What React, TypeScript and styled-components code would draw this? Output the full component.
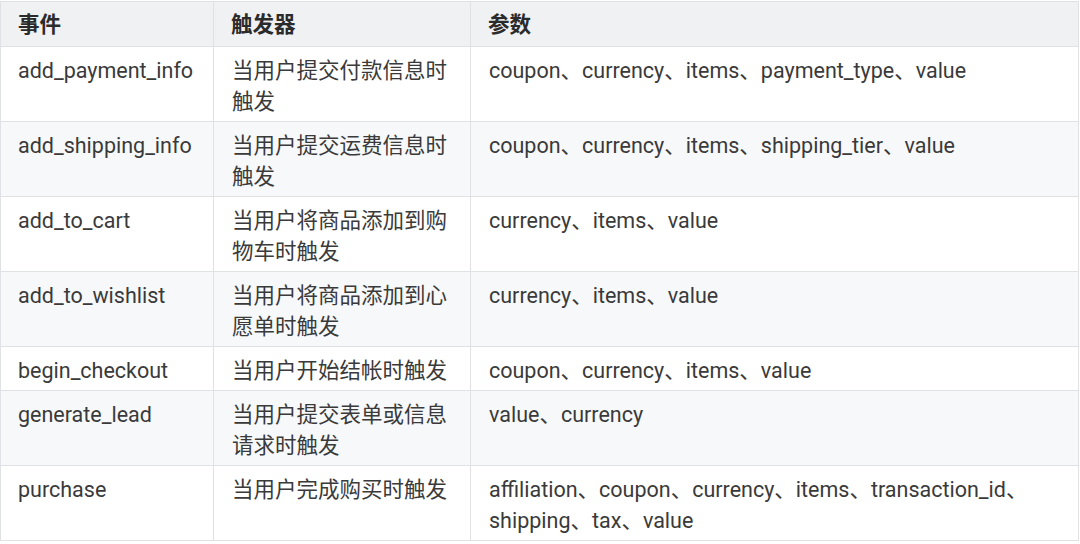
import styled, { createGlobalStyle } from 'styled-components';

const GlobalStyle = createGlobalStyle`
  html, body {
    margin: 0;
    padding: 0;
    background: #ffffff;
  }

  body {
    font-family: Roboto, 'Noto Sans CJK SC', sans-serif;
    color: #3a3a3a;
  }
`;

const StyledTable = styled.table`
  width: 1079px;
  margin-top: 1px;
  border-collapse: collapse;
  table-layout: fixed;
  font-size: 21.5px;
  line-height: 31px;
`;

const HeadCell = styled.th`
  background-color: #f0f1f3;
  border: 1px solid #dfe1e4;
  padding: 7px 16px 6px 17px;
  text-align: left;
  font-weight: 700;
  color: #2b2b2b;
  vertical-align: top;
`;

const Row = styled.tr<{ $striped: boolean }>`
  background-color: ${(p) => (p.$striped ? '#f7f8fa' : '#ffffff')};
`;

const Cell = styled.td`
  border: 1px solid #dfe1e4;
  padding: 8px 16px 4px 18px;
  vertical-align: top;

  &:first-child {
    padding-left: 17px;
  }
`;

const events = [
  {
    name: 'add_payment_info',
    trigger: '当用户提交付款信息时触发',
    params: 'coupon、currency、items、payment_type、value',
  },
  {
    name: 'add_shipping_info',
    trigger: '当用户提交运费信息时触发',
    params: 'coupon、currency、items、shipping_tier、value',
  },
  {
    name: 'add_to_cart',
    trigger: '当用户将商品添加到购物车时触发',
    params: 'currency、items、value',
  },
  {
    name: 'add_to_wishlist',
    trigger: '当用户将商品添加到心愿单时触发',
    params: 'currency、items、value',
  },
  {
    name: 'begin_checkout',
    trigger: '当用户开始结帐时触发',
    params: 'coupon、currency、items、value',
  },
  {
    name: 'generate_lead',
    trigger: '当用户提交表单或信息请求时触发',
    params: 'value、currency',
  },
  {
    name: 'purchase',
    trigger: '当用户完成购买时触发',
    params: 'affiliation、coupon、currency、items、transaction_id、shipping、tax、value',
  },
];

export default function App() {
  return (
    <>
      <GlobalStyle />
      <StyledTable>
        <colgroup>
          <col style={{ width: 213 }} />
          <col style={{ width: 257 }} />
          <col />
        </colgroup>
        <thead>
          <tr>
            <HeadCell>事件</HeadCell>
            <HeadCell>触发器</HeadCell>
            <HeadCell>参数</HeadCell>
          </tr>
        </thead>
        <tbody>
          {events.map((e, i) => (
            <Row key={e.name} $striped={i % 2 === 1}>
              <Cell>{e.name}</Cell>
              <Cell>{e.trigger}</Cell>
              <Cell>{e.params}</Cell>
            </Row>
          ))}
        </tbody>
      </StyledTable>
    </>
  );
}
